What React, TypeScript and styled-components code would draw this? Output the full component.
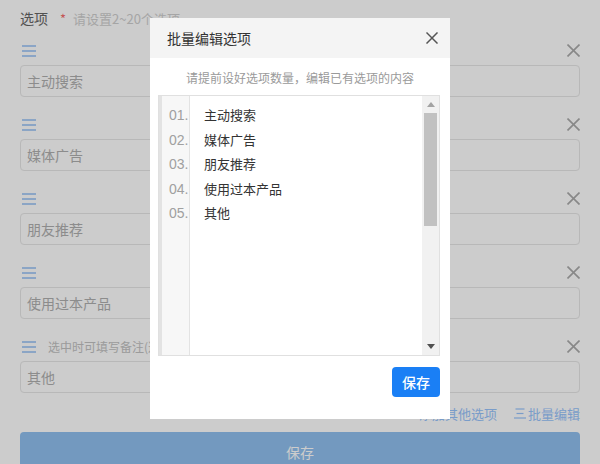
import React from 'react';
import styled, { createGlobalStyle } from 'styled-components';

const GlobalStyle = createGlobalStyle`
  html, body {
    margin: 0;
    padding: 0;
    background: #fff;
    font-family: 'Noto Sans CJK SC', 'Liberation Sans', sans-serif;
    overflow: hidden;
  }
  * {
    box-sizing: border-box;
  }
`;

const options = ['主动搜索', '媒体广告', '朋友推荐', '使用过本产品', '其他'];

const Page = styled.div`
  padding: 0 20px;
  width: 600px;
  height: 464px;
`;

const Header = styled.div`
  display: flex;
  align-items: center;
  height: 36px;
  font-size: 14px;
  color: #666;
`;

const Star = styled.span`
  color: #f56c6c;
  margin: 0 7px 0 12px;
  font-size: 13px;
`;

const Hint = styled.span`
  color: #cfcfcf;
  font-size: 13px;
`;

const OptionRow = styled.div`
  margin-bottom: 13px;
`;

const TopLine = styled.div`
  display: flex;
  align-items: center;
  height: 29px;
`;

const Note = styled.span`
  margin-left: 11px;
  font-size: 12px;
  color: #c2c2c2;
  white-space: nowrap;
`;

const Spacer = styled.div`
  flex: 1;
`;

const Input = styled.div`
  height: 32px;
  border: 1px solid #e6e6e6;
  border-radius: 4px;
  padding: 0 6px;
  display: flex;
  align-items: center;
  font-size: 14px;
  color: #b0b0b0;
`;

const Links = styled.div`
  display: flex;
  justify-content: flex-end;
  align-items: center;
  gap: 17px;
  height: 28px;
  margin-top: -7px;
  font-size: 13px;
  color: #98c4fc;
`;

const LinkItem = styled.span`
  display: flex;
  align-items: center;
  gap: 2px;
`;

const SubmitButton = styled.div`
  margin-top: 5px;
  height: 40px;
  border-radius: 4px;
  background: #90c0ef;
  color: #fff;
  font-size: 14px;
  display: flex;
  align-items: center;
  justify-content: center;
`;

const Mask = styled.div`
  position: fixed;
  inset: 0;
  background: rgba(0, 0, 0, 0.2);
  display: flex;
  justify-content: center;
  align-items: flex-start;
  padding-top: 18px;
`;

const Dialog = styled.div`
  width: 300px;
  background: #fff;
  padding-bottom: 22px;
`;

const DialogHead = styled.div`
  height: 40px;
  background: #f4f4f4;
  display: flex;
  align-items: center;
  padding: 0 12px 0 17px;
  font-size: 14px;
  color: #333;
`;

const DialogHint = styled.div`
  padding-top: 10px;
  line-height: 20px;
  text-align: center;
  font-size: 12px;
  color: #9a9a9a;
`;

const Editor = styled.div`
  margin: 7px 10px 0 8px;
  height: 261px;
  border: 1px solid #e0e0e0;
  display: flex;
`;

const Gutter = styled.div`
  width: 31px;
  border-left: 3px solid #e3e3e3;
  border-right: 1px solid #e3e3e3;
  background: #f7f7f7;
  padding: 7px 0 0 7px;
`;

const LineNo = styled.div`
  height: 24.5px;
  line-height: 24.5px;
  font-size: 14px;
  color: #a0a0a0;
  font-family: 'Liberation Sans', 'Noto Sans CJK SC', sans-serif;
`;

const Content = styled.div`
  flex: 1;
  padding: 7px 0 0 14px;
`;

const Line = styled.div`
  height: 24.5px;
  line-height: 24.5px;
  font-size: 13px;
  color: #333;
`;

const ScrollTrack = styled.div`
  width: 17px;
  background: #f1f1f1;
  display: flex;
  flex-direction: column;
  align-items: center;
`;

const ScrollArrow = styled.div`
  height: 17px;
  display: flex;
  align-items: center;
  justify-content: center;
`;

const Thumb = styled.div`
  width: 13px;
  height: 113px;
  background: #c1c1c1;
`;

const DialogFoot = styled.div`
  display: flex;
  justify-content: flex-end;
  padding: 11px 10px 0 0;
`;

const SaveButton = styled.div`
  width: 48px;
  height: 30px;
  border-radius: 4px;
  background: #1a7ff5;
  color: #fff;
  font-size: 14px;
  font-weight: 500;
  display: flex;
  align-items: center;
  justify-content: center;
`;

const Hamburger = () => (
  <svg width="16" height="14" viewBox="0 0 16 14" style={{ marginLeft: 1 }}>
    <g stroke="#9ac3f6" strokeWidth="1.6">
      <line x1="1" y1="2" x2="15" y2="2" />
      <line x1="1" y1="7" x2="15" y2="7" />
      <line x1="1" y1="12" x2="15" y2="12" />
    </g>
  </svg>
);

const Cross = ({ size, color }: { size: number; color: string }) => (
  <svg width={size} height={size} viewBox="0 0 12 12">
    <g stroke={color} strokeWidth="1.5" strokeLinecap="square">
      <line x1="1" y1="1" x2="11" y2="11" />
      <line x1="11" y1="1" x2="1" y2="11" />
    </g>
  </svg>
);

const Lines = () => (
  <svg width="12" height="12" viewBox="0 0 12 12">
    <g stroke="#98c4fc" strokeWidth="1.2">
      <line x1="1.5" y1="2" x2="10.5" y2="2" />
      <line x1="2.5" y1="6.5" x2="9.5" y2="6.5" />
      <line x1="0" y1="11" x2="12" y2="11" />
    </g>
  </svg>
);

export default function App() {
  return (
    <>
      <GlobalStyle />
      <Page>
        <Header>
          选项<Star>*</Star>
          <Hint>请设置2~20个选项</Hint>
        </Header>
        {options.map((opt, i) => (
          <OptionRow key={opt}>
            <TopLine>
              <Hamburger />
              {i === options.length - 1 && <Note>选中时可填写备注(选填)</Note>}
              <Spacer />
              <Cross size={13} color="#aaa" />
            </TopLine>
            <Input>{opt}</Input>
          </OptionRow>
        ))}
        <Links>
          <LinkItem>+添加其他选项</LinkItem>
          <LinkItem>
            <Lines />
            批量编辑
          </LinkItem>
        </Links>
        <SubmitButton>保存</SubmitButton>
      </Page>
      <Mask>
        <Dialog>
          <DialogHead>
            批量编辑选项
            <Spacer />
            <Cross size={12} color="#555" />
          </DialogHead>
          <DialogHint>请提前设好选项数量，编辑已有选项的内容</DialogHint>
          <Editor>
            <Gutter>
              {options.map((_, i) => (
                <LineNo key={i}>{`0${i + 1}.`}</LineNo>
              ))}
            </Gutter>
            <Content>
              {options.map(opt => (
                <Line key={opt}>{opt}</Line>
              ))}
            </Content>
            <ScrollTrack>
              <ScrollArrow>
                <svg width="8" height="5" viewBox="0 0 8 5">
                  <polygon points="0,5 8,5 4,0" fill="#a3a3a3" />
                </svg>
              </ScrollArrow>
              <Thumb />
              <Spacer />
              <ScrollArrow>
                <svg width="8" height="5" viewBox="0 0 8 5">
                  <polygon points="0,0 8,0 4,5" fill="#505050" />
                </svg>
              </ScrollArrow>
            </ScrollTrack>
          </Editor>
          <DialogFoot>
            <SaveButton>保存</SaveButton>
          </DialogFoot>
        </Dialog>
      </Mask>
    </>
  );
}
